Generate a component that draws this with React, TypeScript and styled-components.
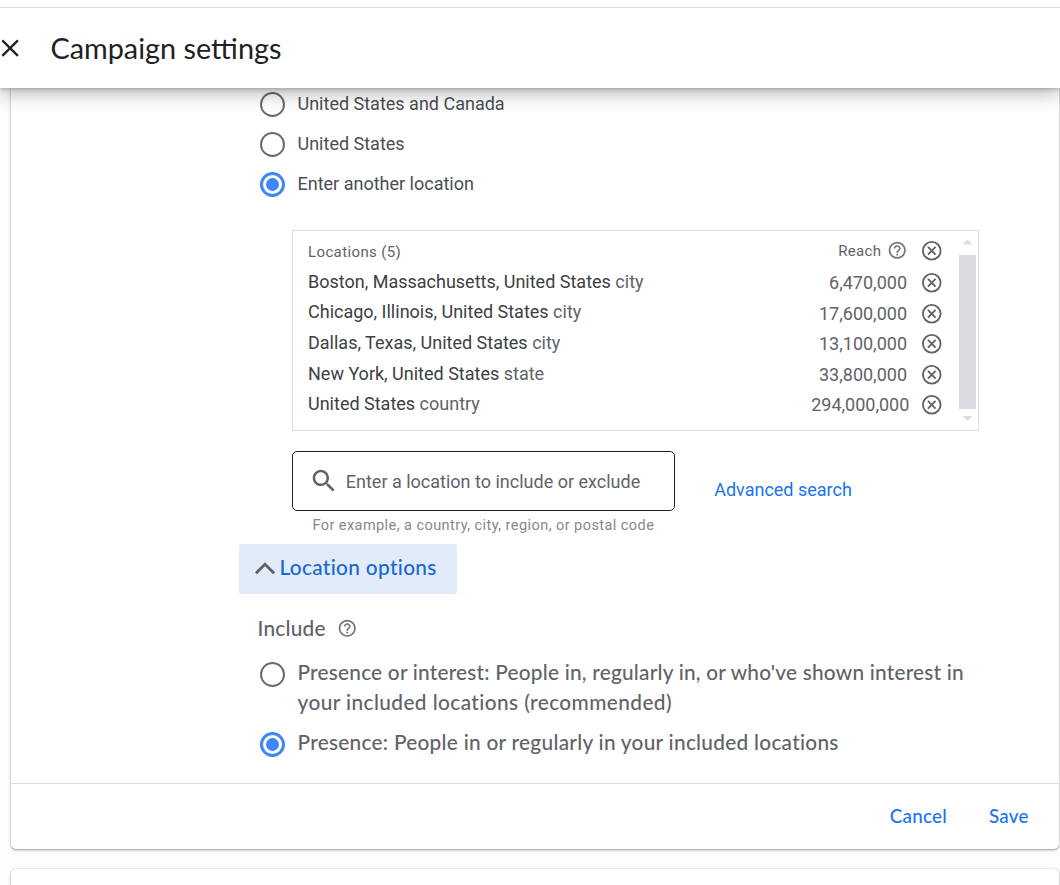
import React from 'react';
import styled, { createGlobalStyle } from 'styled-components';

const GlobalStyle = createGlobalStyle`
  *, *::before, *::after { box-sizing: border-box; }
  body {
    margin: 0;
    background: #fdfdfd;
    font-family: Roboto, "Liberation Sans", sans-serif;
    color: #3c4043;
  }
`;

const sans = 'Lato, "Open Sans", sans-serif';

const Page = styled.div`
  display: flex;
  flex-direction: column;
  height: 885px;
  overflow: hidden;
`;

const Header = styled.header`
  position: relative;
  z-index: 1;
  flex: none;
  display: flex;
  align-items: center;
  gap: 31.5px;
  height: 88px;
  padding-top: 8px;
  background: linear-gradient(#fff 7px, #dadce0 7px, #dadce0 8px, #fff 8px);
  box-shadow: 0 5px 18px rgba(0, 0, 0, 0.3), 0 1px 4px rgba(0, 0, 0, 0.22);
`;

const CloseIcon = styled.svg`
  width: 19px;
  height: 18px;
  flex: none;
`;

const Title = styled.h1`
  margin: 0;
  font: 400 28.8px/40px ${sans};
  color: #202124;
  white-space: nowrap;
`;

const Main = styled.main`
  display: flex;
  flex-direction: column;
  gap: 20px;
  padding: 0 1px 0 11px;
`;

const Card = styled.section<{ $round: 'top' | 'bottom' }>`
  background: #fff;
  border-radius: ${(p) => (p.$round === 'top' ? '5px 5px 0 0' : '0 0 5px 5px')};
  box-shadow: 0 1px 2px rgba(0, 0, 0, 0.3), 0 0 2px rgba(0, 0, 0, 0.12), 0 1px 4px rgba(0, 0, 0, 0.1);
  height: ${(p) => (p.$round === 'top' ? '40px' : '761px')};
`;

const CardBody = styled.div`
  height: 695px;
  padding-left: 249px;
`;

const RadioRow = styled.label<{ $lines?: number }>`
  display: flex;
  align-items: flex-start;
  gap: 12.5px;
  height: ${(p) => (p.$lines === 2 ? 70 : 40)}px;
`;

const Dot = styled.span<{ $on?: boolean }>`
  flex: none;
  display: grid;
  place-items: center;
  width: 25px;
  height: 25px;
  margin-top: 4px;
  border: ${(p) => (p.$on ? '3px solid #4285f4' : '2px solid #6b6b6b')};
  border-radius: 50%;

  &::after {
    content: '';
    width: 13px;
    height: 13px;
    border-radius: 50%;
    background: ${(p) => (p.$on ? '#4285f4' : 'transparent')};
  }
`;

const RadioText = styled.span`
  padding-top: 1px;
  font-size: 18px;
  line-height: 30px;
  color: #4a4e52;
  white-space: nowrap;
`;

const OptionText = styled.span`
  margin-top: -1px;
  font: 500 20.8px/30px ${sans};
  letter-spacing: 0.22px;
  color: #5f6368;
  white-space: nowrap;
`;

const OptionLine = styled.span<{ $spacing: number }>`
  display: block;
  letter-spacing: ${(p) => p.$spacing}px;
`;

const LocationsBox = styled.div`
  display: flex;
  justify-content: space-between;
  width: 687px;
  height: 201px;
  margin: 22px 0 0 32px;
  padding: 7px 2px 0 15px;
  border: 1px solid #dadce0;
`;

const LocationList = styled.div`
  width: 636px;
`;

const LocationRow = styled.div`
  display: grid;
  grid-template-columns: 1fr auto 24px;
  column-gap: 13px;
  align-items: center;
  height: 30.6px;
  font-size: 18px;
  color: #5f6368;
  white-space: nowrap;
`;

const LocationHead = styled(LocationRow)`
  height: 25px;
  margin-bottom: 4.4px;
  font-size: 15px;
  letter-spacing: 0.38px;
`;

const PlaceName = styled.span`
  padding-bottom: 2.6px;
`;

const Place = styled.span`
  color: #3c4043;
`;

const HeadLabel = styled.span`
  padding-top: 2px;
`;

const Amount = styled.span<{ $wide?: boolean }>`
  margin-right: ${(p) => (p.$wide ? -2.3 : 0)}px;
  padding-bottom: 0.4px;
`;

const Reach = styled.span`
  display: flex;
  align-items: center;
  gap: 5px;
`;

const Icon = styled.svg<{ $size: number; $color?: string }>`
  flex: none;
  display: block;
  width: ${(p) => p.$size}px;
  height: ${(p) => p.$size}px;
  fill: ${(p) => p.$color ?? '#5f6368'};
`;

const LineIcon = styled(Icon)`
  fill: none;
  stroke: #5f6368;
`;

const Scrollbar = styled.div`
  display: flex;
  flex-direction: column;
  align-items: center;
  width: 17px;
`;

const Arrow = styled.span<{ $down?: boolean }>`
  width: 10px;
  height: 5px;
  margin-top: ${(p) => (p.$down ? 7 : 1.5)}px;
  background: #dadce0;
  clip-path: ${(p) => (p.$down ? 'polygon(0 0, 100% 0, 50% 100%)' : 'polygon(50% 0, 100% 100%, 0 100%)')};
`;

const Thumb = styled.span`
  width: 17px;
  height: 154px;
  margin-top: 10.5px;
  background: #dadce0;
`;

const SearchRow = styled.div`
  display: flex;
  gap: 39.2px;
  margin: 20px 0 0 32px;
`;

const SearchField = styled.div`
  display: flex;
  align-items: center;
  gap: 7.3px;
  width: 383px;
  height: 60px;
  padding-left: 15.5px;
  border: 1px solid #202124;
  border-radius: 5px;
  font-size: 18px;
  color: #5f6368;
  white-space: nowrap;
`;

const AdvancedLink = styled.a`
  margin-top: 24px;
  font-size: 18px;
  line-height: 30px;
  color: #1a73f0;
  white-space: nowrap;
`;

const Hint = styled.div`
  margin: 5px 0 0 52.4px;
  font-size: 14.5px;
  line-height: 19px;
  letter-spacing: 0.44px;
  color: #85888b;
`;

const OptionsToggle = styled.button`
  display: flex;
  align-items: center;
  width: 218px;
  height: 50px;
  margin: 9px 0 0 -21px;
  padding: 0 0 0 5.5px;
  border: 0;
  border-radius: 2px;
  background: #e2ebf9;
`;

const ToggleLabel = styled.span`
  margin-left: -5px;
  padding-bottom: 4px;
  font: 500 20.8px/30px ${sans};
  letter-spacing: 0.33px;
  color: #1967d2;
  white-space: nowrap;
`;

const IncludeRow = styled.div`
  display: flex;
  align-items: center;
  gap: 11px;
  height: 30px;
  margin: 19px 0 15px -2.5px;
`;

const Actions = styled.footer`
  display: flex;
  justify-content: flex-end;
  align-items: center;
  gap: 42px;
  height: 66px;
  padding: 0 30.3px 1px 0;
  border-top: 1px solid #dadce0;
`;

const Action = styled.button`
  padding: 0;
  border: 0;
  background: none;
  font: 500 18.8px/26px ${sans};
  letter-spacing: 0.25px;
  color: #1a73f0;
`;

const Remove = () => (
  <LineIcon $size={23.5} viewBox="0 0 24 24" strokeWidth="1.9">
    <circle cx="12" cy="12" r="9" />
    <path d="M8.1 8.1l7.8 7.8M15.9 8.1l-7.8 7.8" />
  </LineIcon>
);

const Help = () => (
  <Icon $size={20.5} $color="#757575" viewBox="0 0 24 24">
    <path d="M11 18h2v-2h-2v2zm1-16C6.48 2 2 6.48 2 12s4.48 10 10 10 10-4.48 10-10S17.52 2 12 2zm0 18c-4.41 0-8-3.59-8-8s3.59-8 8-8 8 3.59 8 8-3.59 8-8 8zm0-14c-2.21 0-4 1.79-4 4h2c0-1.1.9-2 2-2s2 .9 2 2c0 2-3 1.75-3 5h2c0-2.25 3-2.5 3-5 0-2.21-1.79-4-4-4z" />
  </Icon>
);

const locations = [
  { place: 'Boston, Massachusetts, United States', kind: 'city', reach: '6,470,000' },
  { place: 'Chicago, Illinois, United States', kind: 'city', reach: '17,600,000' },
  { place: 'Dallas, Texas, United States', kind: 'city', reach: '13,100,000' },
  { place: 'New York, United States', kind: 'state', reach: '33,800,000' },
  { place: 'United States', kind: 'country', reach: '294,000,000' },
];

export default function App() {
  return (
    <Page>
      <GlobalStyle />
      <Header>
        <CloseIcon viewBox="0 0 19 18">
          <path d="M2.3 1.4L17.9 16.9M17.9 1.4L2.3 16.9" stroke="#202124" strokeWidth="2.3" fill="none" />
        </CloseIcon>
        <Title>Campaign settings</Title>
      </Header>
      <Main>
        <Card $round="bottom">
          <CardBody>
            <RadioRow><Dot /><RadioText>United States and Canada</RadioText></RadioRow>
            <RadioRow><Dot /><RadioText>United States</RadioText></RadioRow>
            <RadioRow><Dot $on /><RadioText>Enter another location</RadioText></RadioRow>
            <LocationsBox>
              <LocationList>
                <LocationHead>
                  <HeadLabel>Locations (5)</HeadLabel>
                  <Reach>Reach <Help /></Reach>
                  <Remove />
                </LocationHead>
                {locations.map((l) => (
                  <LocationRow key={l.place}>
                    <PlaceName><Place>{l.place}</Place> {l.kind}</PlaceName>
                    <Amount $wide={l.reach.length > 10}>{l.reach}</Amount>
                    <Remove />
                  </LocationRow>
                ))}
              </LocationList>
              <Scrollbar><Arrow /><Thumb /><Arrow $down /></Scrollbar>
            </LocationsBox>
            <SearchRow>
              <SearchField>
                <Icon $size={30} viewBox="0 0 24 24">
                  <path d="M15.5 14h-.79l-.28-.27C15.41 12.59 16 11.11 16 9.5 16 5.91 13.09 3 9.5 3S3 5.91 3 9.5 5.91 16 9.5 16c1.61 0 3.09-.59 4.23-1.57l.27.28v.79l5 4.99L20.49 19l-4.99-5zm-6 0C7.01 14 5 11.99 5 9.5S7.01 5 9.5 5 14 7.01 14 9.5 11.99 14 9.5 14z" />
                </Icon>
                Enter a location to include or exclude
              </SearchField>
              <AdvancedLink>Advanced search</AdvancedLink>
            </SearchRow>
            <Hint>For example, a country, city, region, or postal code</Hint>
            <OptionsToggle>
              <LineIcon $size={40} viewBox="0 0 24 24" strokeWidth="1.7">
                <path d="M6.57 14.6L12 9.2l5.43 5.4" />
              </LineIcon>
              <ToggleLabel>Location options</ToggleLabel>
            </OptionsToggle>
            <IncludeRow><OptionText>Include</OptionText><Help /></IncludeRow>
            <RadioRow $lines={2}>
              <Dot />
              <OptionText>
                <OptionLine $spacing={0.22}>Presence or interest: People in, regularly in, or who've shown interest in</OptionLine>
                <OptionLine $spacing={0.42}>your included locations (recommended)</OptionLine>
              </OptionText>
            </RadioRow>
            <RadioRow>
              <Dot $on />
              <OptionText>
                <OptionLine $spacing={0.28}>Presence: People in or regularly in your included locations</OptionLine>
              </OptionText>
            </RadioRow>
          </CardBody>
          <Actions>
            <Action>Cancel</Action>
            <Action>Save</Action>
          </Actions>
        </Card>
        <Card $round="top" />
      </Main>
    </Page>
  );
}
